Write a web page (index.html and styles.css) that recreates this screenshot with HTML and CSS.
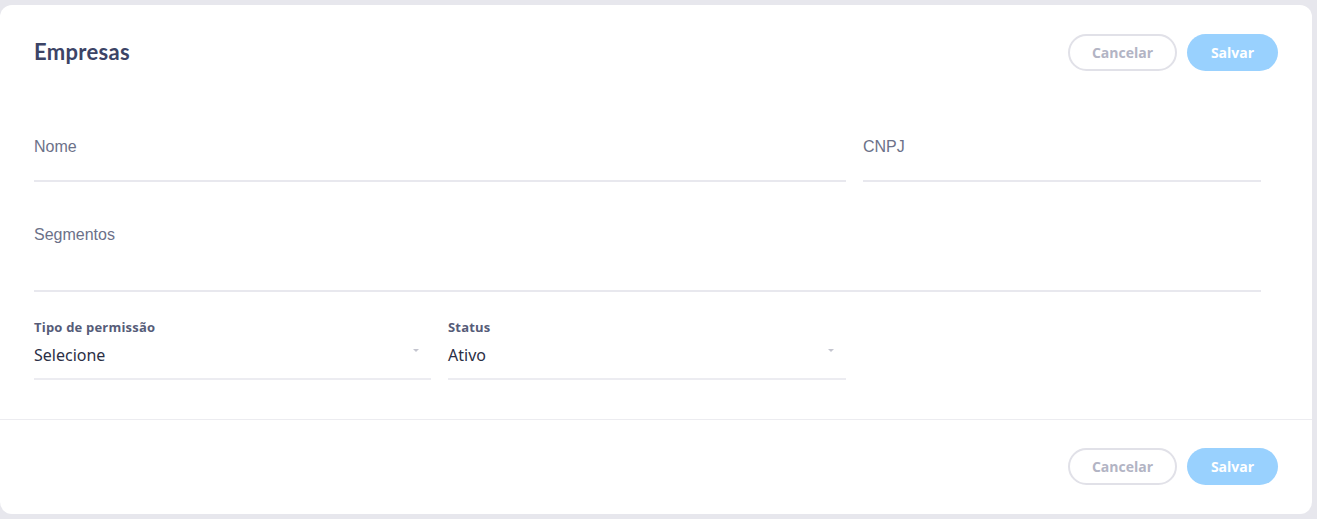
FILE: index.html
```html
<!DOCTYPE html>
<html lang="pt-BR">
<head>
<meta charset="utf-8">
<title>Empresas</title>
<link rel="stylesheet" href="styles.css">
</head>
<body>
<div class="card">
  <div class="card-header">
    <h1 class="title">Empresas</h1>
    <div class="actions">
      <button class="btn btn-outline">Cancelar</button>
      <button class="btn btn-primary">Salvar</button>
    </div>
  </div>
  <div class="card-body">
    <div class="grid">
      <div class="field span-2">
        <label class="float-label">Nome</label>
        <div class="input"></div>
      </div>
      <div class="field">
        <label class="float-label">CNPJ</label>
        <div class="input"></div>
      </div>
      <div class="field span-3 seg">
        <label class="float-label">Segmentos</label>
        <div class="input tall"></div>
      </div>
      <div class="field sel">
        <label class="small-label">Tipo de permissão</label>
        <div class="select"><span>Selecione</span><i class="caret"></i></div>
      </div>
      <div class="field sel">
        <label class="small-label">Status</label>
        <div class="select"><span>Ativo</span><i class="caret"></i></div>
      </div>
    </div>
  </div>
  <div class="card-footer">
    <div class="actions">
      <button class="btn btn-outline">Cancelar</button>
      <button class="btn btn-primary">Salvar</button>
    </div>
  </div>
</div>
</body>
</html>
```

FILE: styles.css
```css
html, body {
  margin: 0;
  padding: 0;
  background: #e7e7ed;
}
body {
  padding: 5px 5px 5px 0;
  font-family: Lato, "Open Sans", sans-serif;
}
.card {
  background: #ffffff;
  border-radius: 12px;
  height: 509px;
  box-sizing: border-box;
  display: flex;
  flex-direction: column;
}
.card-header {
  display: flex;
  align-items: center;
  justify-content: space-between;
  padding: 29px 34px;
  height: 95px;
  box-sizing: border-box;
  flex-shrink: 0;
}
.title {
  margin: 0 0 2px 0;
  font-family: Lato, sans-serif;
  font-weight: 700;
  font-size: 22px;
  line-height: 26px;
  color: #3c4466;
  letter-spacing: 0.3px;
}
.actions {
  display: flex;
  gap: 10px;
  height: 37px;
}
.btn {
  height: 37px;
  border-radius: 19px;
  font-family: "Open Sans", sans-serif;
  font-weight: 700;
  font-size: 14px;
  box-sizing: border-box;
  padding: 0;
  cursor: pointer;
}
.btn-outline {
  width: 109px;
  background: #fff;
  border: 2px solid #e1e1e8;
  color: #b2b4c4;
}
.btn-primary {
  width: 91px;
  background: #99d1fe;
  border: none;
  color: #ffffff;
}
.card-body {
  padding: 37px 51px 0 34px;
  height: 320px;
  box-sizing: border-box;
  border-bottom: 1px solid #ececf0;
  flex-shrink: 0;
}
.grid {
  display: grid;
  grid-template-columns: 397px 398px 398px;
  column-gap: 17px;
}
.span-2 { grid-column: span 2; }
.span-3 { grid-column: span 3; }
.field { display: flex; flex-direction: column; }
.float-label {
  font-family: "Liberation Sans", Arial, sans-serif;
  font-size: 16px;
  line-height: 20px;
  height: 20px;
  color: #6c7189;
}
.input {
  height: 23px;
  border-bottom: 2px solid #e8e8ee;
}
.input.tall { height: 45px; }
.seg { margin-top: 43px; }
.sel { margin-top: 28px; }
.small-label {
  font-family: "Open Sans", sans-serif;
  font-weight: 700;
  font-size: 13px;
  letter-spacing: 0.2px;
  line-height: 15px;
  height: 15px;
  color: #565c78;
}
.select {
  display: flex;
  align-items: center;
  justify-content: space-between;
  margin-top: 10px;
  height: 20px;
  padding-bottom: 13px;
  border-bottom: 2px solid #ececf1;
}
.select span {
  font-family: "Noto Sans", "Open Sans", sans-serif;
  font-size: 16px;
  line-height: 20px;
  color: #2b2f45;
}
.caret {
  width: 0;
  height: 0;
  border-left: 3px solid transparent;
  border-right: 3px solid transparent;
  border-top: 3px solid #c4c5cf;
  margin-right: 12px;
  margin-bottom: 10px;
}
.card-footer {
  display: flex;
  justify-content: flex-end;
  padding: 28px 34px 0 34px;
}
```
